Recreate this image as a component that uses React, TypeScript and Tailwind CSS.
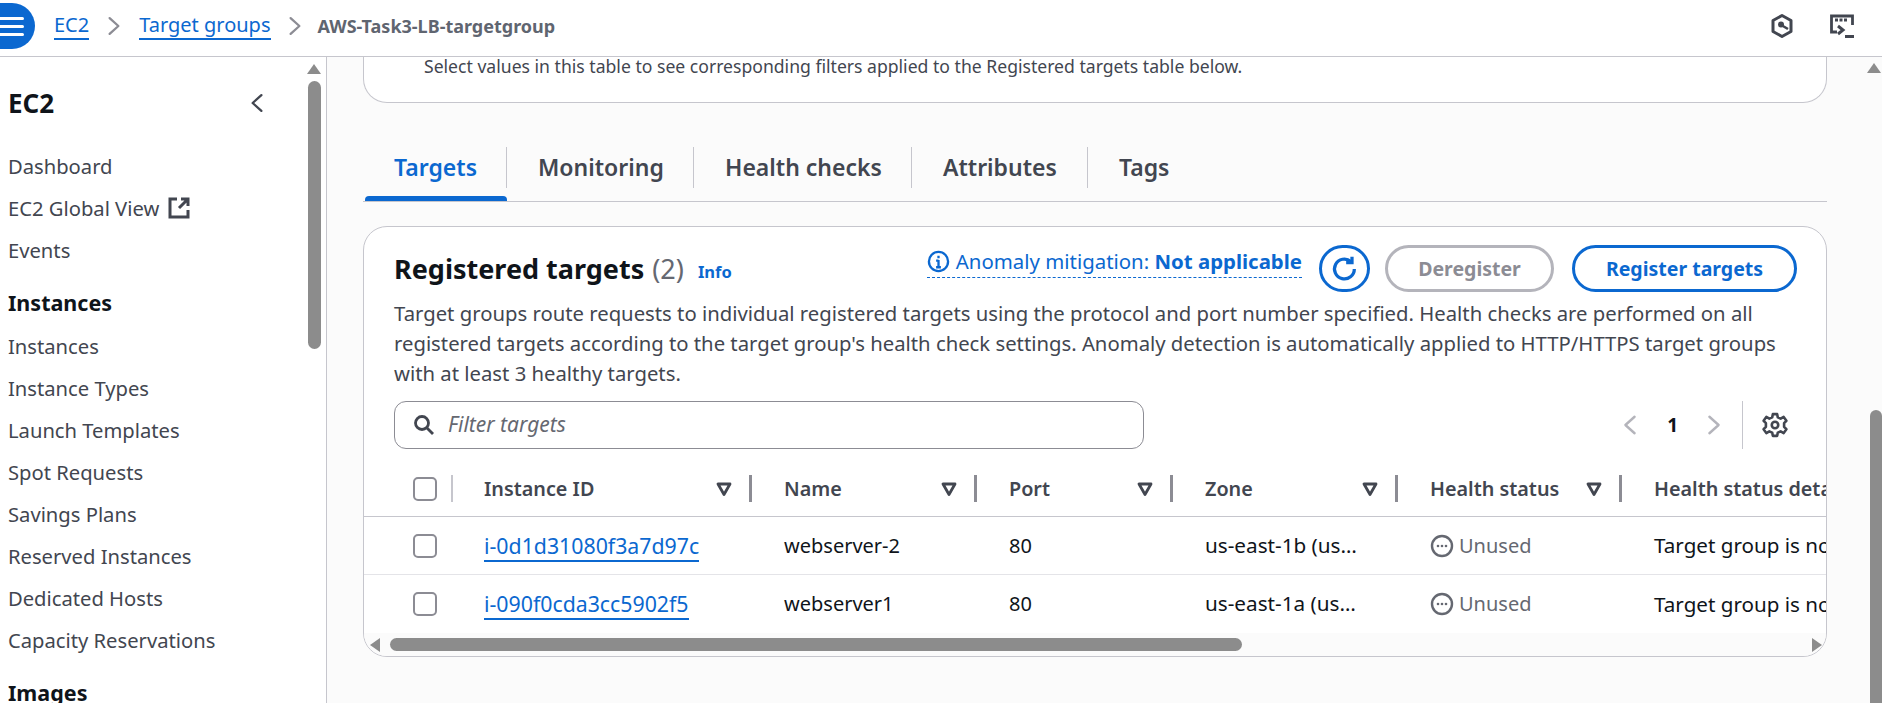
import React from "react";

const BLUE = "text-[#0b68d0]";

function Menu() {
  return (
    <div className="w-[35px] h-[46px] rounded-r-full bg-[#0b68d0] flex flex-col justify-center gap-[5px] pr-[11px]">
      <div className="h-[3px] bg-white rounded-r" />
      <div className="h-[3px] bg-white rounded-r" />
      <div className="h-[3px] bg-white rounded-r" />
    </div>
  );
}

function Chevron({ dir = "right", className = "" }: { dir?: "left" | "right"; className?: string }) {
  return (
    <svg viewBox="0 0 16 24" className={className} fill="none" stroke="currentColor" strokeWidth="2.6" strokeLinecap="round" strokeLinejoin="round">
      <path d={dir === "right" ? "M3 3l10 9-10 9" : "M13 3L3 12l10 9"} />
    </svg>
  );
}

function NavItem({ children }: { children: React.ReactNode }) {
  return <div className="h-[42px] flex items-center pl-2 text-[20.2px] text-[#424650]">{children}</div>;
}

function NavHead({ children, className = "" }: { children: React.ReactNode; className?: string }) {
  return <div className={`h-[42px] flex items-center pl-2 text-[21.5px] font-bold text-[#0f141a] ${className}`}>{children}</div>;
}

function Tab({ label, active, w, last }: { label: string; active?: boolean; w: string; last?: boolean }) {
  return (
    <div className={`${w} relative h-[56px] flex items-center pl-[31px] pb-[11px] text-[23px] font-semibold ${active ? "text-[#0b68d0]" : "text-[#424650]"}`}>
      {label}
      {!last && <div className="absolute right-0 top-[2px] h-[41px] w-px bg-[#c6c6cd]" />}
      {active && <div className="absolute left-[2px] right-0 bottom-0 h-[5px] bg-[#0b68d0] rounded-t" />}
    </div>
  );
}

function Check() {
  return <div className="w-[24px] h-[24px] rounded-[5px] border-2 border-[#8c8c94] bg-white" />;
}

function Caret() {
  return (
    <svg viewBox="0 0 16 16" className="w-[16px] h-[16px] text-[#424650]" fill="none" stroke="currentColor" strokeWidth="2.8" strokeLinejoin="round">
      <path d="M2 3h12l-6 10.5z" />
    </svg>
  );
}

function HeadCell({ label, w, caret = true }: { label: string; w: string; caret?: boolean }) {
  return (
    <div className={`${w} shrink-0 flex items-center pr-[32px] text-[19.8px] font-semibold text-[#424650] whitespace-nowrap`}>
      <span className="flex-1">{label}</span>
      {caret && <span className="mr-[17px] flex"><Caret /></span>}
      {caret && <div className="w-[3px] h-[27px] bg-[#8c8c94]" />}
    </div>
  );
}

function Unused() {
  return (
    <div className="flex items-center gap-[5px] text-[#656871]">
      <svg viewBox="0 0 24 24" className="w-[24px] h-[24px]" fill="none">
        <circle cx="12" cy="12" r="10" stroke="currentColor" strokeWidth="2.4" />
        <circle cx="8" cy="12" r="1.3" fill="currentColor" />
        <circle cx="12" cy="12" r="1.3" fill="currentColor" />
        <circle cx="16" cy="12" r="1.3" fill="currentColor" />
      </svg>
      <span>Unused</span>
    </div>
  );
}

function Row({ id, name, zone, border }: { id: string; name: string; zone: string; border?: boolean }) {
  return (
    <div className={`h-[58px] flex items-center pl-[49px] text-[20px] text-[#0f141a] whitespace-nowrap bg-white ${border ? "border-b border-[#e4e4e8]" : ""}`}>
      <div className="w-[71px] shrink-0 flex"><Check /></div>
      <div className="w-[300px] shrink-0"><span className={`${BLUE} text-[21.3px] border-b-2 border-[#0b68d0]`}>{id}</span></div>
      <div className="w-[225px] shrink-0">{name}</div>
      <div className="w-[196px] shrink-0">80</div>
      <div className="w-[225px] shrink-0 text-[20.7px]">{zone}</div>
      <div className="w-[224px] shrink-0"><Unused /></div>
      <div className="shrink-0 text-[20.6px]">Target group is not configured</div>
    </div>
  );
}

export default function App() {
  return (
    <div className="relative w-[1882px] h-[703px] overflow-hidden bg-[#fbfbfb] font-['Noto_Sans',sans-serif]">
      <header className="h-[57px] bg-white border-b border-[#c6c6cd] flex items-center pb-[4px]">
        <Menu />
        <div className="ml-[19px] flex items-center text-[20px]">
          <span className={`${BLUE} border-b-2 border-[#0b68d0] leading-[26px]`}>EC2</span>
          <Chevron className="w-[14px] h-[22px] mx-[18px] text-[#8c8c94]" />
          <span className={`${BLUE} border-b-2 border-[#0b68d0] leading-[26px]`}>Target groups</span>
          <Chevron className="w-[14px] h-[22px] ml-[17px] mr-[16px] text-[#8c8c94]" />
          <span className="text-[18px] font-bold text-[#5f6570]">AWS-Task3-LB-targetgroup</span>
        </div>
        <div className="ml-auto flex items-center text-[#424650] mr-[27px]">
          <svg viewBox="0 0 24 26" className="w-[24px] h-[26px] mr-[35px]" fill="none" stroke="currentColor">
            <path d="M12 2.5l9 5v11l-9 5-9-5v-11z" strokeWidth="3" strokeLinejoin="round" />
            <circle cx="11" cy="11.5" r="3" fill="currentColor" strokeWidth="0" />
            <path d="M12 12.5l6 3.5" strokeWidth="2.6" />
          </svg>
          <svg viewBox="0 0 26 26" className="w-[26px] h-[26px]" fill="none" stroke="currentColor">
            <path d="M8 19H2.5V3h21v9" strokeWidth="2.8" />
            <path d="M6 7h3M10.5 7h3M15 7h3" strokeWidth="3" />
            <path d="M9 13l5 4-5 4" strokeWidth="3" />
            <path d="M16 23.5h9" strokeWidth="3" />
          </svg>
        </div>
      </header>

      <div className="flex h-[646px]">
        <aside className="relative w-[327px] shrink-0 bg-white border-r border-[#c6c6cd] overflow-hidden">
          <div className="h-[88px] pt-[32px] pr-[62px] flex items-start justify-between pl-2">
            <span className="text-[26px] leading-[28px] font-bold text-[#0f141a]">EC2</span>
            <Chevron dir="left" className="w-[14px] h-[22px] mt-[3px] text-[#424650]" />
          </div>
          <NavItem>Dashboard</NavItem>
          <NavItem>
            EC2 Global View
            <svg viewBox="0 0 22 22" className="w-[22px] h-[22px] ml-[9px]" fill="none" stroke="currentColor" strokeWidth="3">
              <path d="M9 2H2v18h18v-7" />
              <path d="M13 2h7v7M20 2l-9 9" />
            </svg>
          </NavItem>
          <NavItem>Events</NavItem>
          <NavHead className="mt-[11px] mb-[1px]">Instances</NavHead>
          <NavItem>Instances</NavItem>
          <NavItem>Instance Types</NavItem>
          <NavItem>Launch Templates</NavItem>
          <NavItem>Spot Requests</NavItem>
          <NavItem>Savings Plans</NavItem>
          <NavItem>Reserved Instances</NavItem>
          <NavItem>Dedicated Hosts</NavItem>
          <NavItem>Capacity Reservations</NavItem>
          <NavHead className="mt-[11px]">Images</NavHead>

          <div className="absolute right-[5px] top-[7px] w-0 h-0 border-x-[7px] border-x-transparent border-b-[10px] border-b-[#8c8c8c]" />
          <div className="absolute right-[5px] top-[24px] w-[13px] h-[268px] rounded-full bg-[#8c8c8c]" />
        </aside>

        <main className="flex-1 min-w-0 pl-[36px] pr-[55px]">
          <div className="h-[46px] bg-white border-x border-b border-[#c6c6cd] rounded-b-[24px] pl-[60px] text-[17.6px] leading-[18px] text-[#424650]">
            Select values in this table to see corresponding filters applied to the Registered targets table below.
          </div>

          <div className="mt-[42px] flex border-b border-[#c6c6cd] h-[57px]">
            <Tab label="Targets" active w="w-[144px]" />
            <Tab label="Monitoring" w="w-[187px]" />
            <Tab label="Health checks" w="w-[218px]" />
            <Tab label="Attributes" w="w-[176px]" />
            <Tab label="Tags" w="w-[120px]" last />
          </div>

          <section className="mt-[24px] h-[431px] border border-[#c6c6cd] rounded-[24px] overflow-hidden bg-white">
            <div className="h-[65px] mt-[9px] flex items-center pl-[30px] pr-[29px]">
              <span className="text-[27px] font-bold text-[#0f141a] mt-[2px]">Registered targets</span>
              <span className="ml-2 text-[27px] text-[#656871] mt-[2px]">(2)</span>
              <span className={`ml-[14px] text-[16.5px] font-bold ${BLUE} mt-[7px]`}>Info</span>
              <div className={`ml-auto flex items-center gap-[6px] text-[20.4px] ${BLUE} border-b border-dashed border-[#0b68d0] h-[32px] mb-[13px]`}>
                <svg viewBox="0 0 24 24" className="w-[23px] h-[23px]" fill="none" stroke="currentColor" strokeWidth="2.4">
                  <circle cx="12" cy="12" r="10" />
                  <path d="M12 10.5V18M12 6v2.6M9.5 11h2.5M9.5 18h5" />
                </svg>
                <span>Anomaly mitigation: <b className="font-bold">Not applicable</b></span>
              </div>
              <div className="ml-[17px] w-[51px] h-[47px] rounded-full border-[3px] border-[#0b68d0] flex items-center justify-center text-[#0b68d0]">
                <svg viewBox="0 0 24 24" className="w-[28px] h-[28px]" fill="none" stroke="currentColor" strokeWidth="2.8">
                  <path d="M20 12a8.5 8.5 0 1 1-3-6.5" />
                  <path d="M18 1.5v5h-5" />
                </svg>
              </div>
              <div className="ml-[15px] w-[169px] h-[47px] rounded-full border-[3px] border-[#b4b4bb] flex items-center justify-center text-[19.5px] font-bold text-[#8c8c94]">Deregister</div>
              <div className={`ml-[18px] w-[225px] h-[47px] rounded-full border-[3px] border-[#0b68d0] flex items-center justify-center text-[19.5px] font-bold ${BLUE}`}>Register targets</div>
            </div>
            <p className="pl-[30px] pr-[40px] text-[20.3px] leading-[30px] text-[#424650] mt-[-3px]">
              Target groups route requests to individual registered targets using the protocol and port number specified. Health checks are performed on all registered targets according to the target group's health check settings. Anomaly detection is automatically applied to HTTP/HTTPS target groups with at least 3 healthy targets.
            </p>
            <div className="mt-[13px] flex items-center pl-[30px] pr-[38px]">
              <div className="w-[750px] h-[48px] rounded-[12px] border border-[#8c8c94] flex items-center pl-[18px] gap-[13px] bg-white">
                <svg viewBox="0 0 22 22" className="w-[22px] h-[22px] text-[#424650]" fill="none" stroke="currentColor" strokeWidth="2.8">
                  <circle cx="9" cy="9" r="6.5" />
                  <path d="M14 14l6 6" />
                </svg>
                <span className="text-[21px] italic text-[#656871]">Filter targets</span>
              </div>
              <div className="ml-auto flex items-center h-[48px]">
                <Chevron dir="left" className="w-[16px] h-[22px] text-[#b4b4bb]" />
                <span className="ml-[29px] mr-[28px] text-[19px] font-bold text-[#0f141a]">1</span>
                <Chevron className="w-[16px] h-[22px] text-[#b4b4bb]" />
                <div className="ml-[20px] w-px h-[48px] bg-[#c6c6cd]" />
                <svg viewBox="0 0 24 24" className="ml-[19px] w-[26px] h-[26px] text-[#424650]" fill="none" stroke="currentColor" strokeWidth="2.4" strokeLinejoin="round">
                  <circle cx="12" cy="12" r="3" />
                  <path d="M10 2h4l.6 3 2.6 1.1L20 4.5l2.5 3.6-2.1 2.2v3.4l2.1 2.2-2.5 3.6-2.8-1.6-2.6 1.1-.6 3h-4l-.6-3-2.6-1.1L4 19.5l-2.5-3.6 2.1-2.2v-3.400L1.5 8.1 4 4.5l2.800 1.600L9.400 5z" />
                </svg>
              </div>
            </div>
            <div className="mt-[12px] h-[56px] flex items-center pl-[49px] bg-white border-b border-[#c6c6cd] overflow-hidden">
              <div className="w-[71px] shrink-0 flex items-center">
                <Check />
                <div className="ml-[14px] w-[2px] h-[27px] bg-[#c6c6cd]" />
              </div>
              <HeadCell label="Instance ID" w="w-[300px]" />
              <HeadCell label="Name" w="w-[225px]" />
              <HeadCell label="Port" w="w-[196px]" />
              <HeadCell label="Zone" w="w-[225px]" />
              <HeadCell label="Health status" w="w-[224px]" />
              <HeadCell label="Health status details" w="w-[260px]" caret={false} />
            </div>
            <div className="overflow-hidden">
              <Row id="i-0d1d31080f3a7d97c" name="webserver-2" zone="us-east-1b (us…" border />
              <Row id="i-090f0cda3cc5902f5" name="webserver1" zone="us-east-1a (us…" />
            </div>
            <div className="h-[23px] bg-[#fbfbfb] flex items-center pl-[6px] pr-[4px]">
              <div className="w-0 h-0 border-y-[7px] border-y-transparent border-r-[10px] border-r-[#8c8c8c]" />
              <div className="ml-[10px] w-[852px] h-[13px] rounded-full bg-[#8c8c8c]" />
              <div className="ml-auto w-0 h-0 border-y-[7px] border-y-transparent border-l-[10px] border-l-[#8c8c8c]" />
            </div>
          </section>
        </main>
      </div>

      <div className="absolute right-[1px] top-[63px] w-0 h-0 border-x-[7px] border-x-transparent border-b-[10px] border-b-[#8c8c8c]" />
      <div className="absolute right-0 top-[410px] w-[12px] h-[293px] rounded-t-full bg-[#8c8c8c]" />
    </div>
  );
}
